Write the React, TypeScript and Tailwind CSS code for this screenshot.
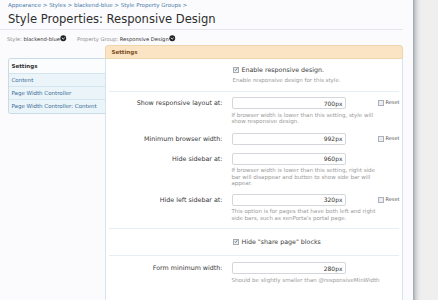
import type { ReactNode } from 'react';

function Check({ checked }: { checked?: boolean }) {
  return (
    <span className="inline-flex h-[6px] w-[6px] shrink-0 items-center justify-center border border-[#a3abb3] bg-[#eef1f4]">
      {checked && (
        <svg viewBox="0 0 6 6" className="h-[5px] w-[5px]">
          <path d="M1 3.1 L2.4 4.5 L5 1.2" stroke="#3d526a" strokeWidth="1.1" fill="none" />
        </svg>
      )}
    </span>
  );
}

function Menu() {
  return (
    <svg viewBox="0 0 8 8" className="ml-[0.5px] inline-block h-[6.5px] w-[6.5px] align-[-1px]">
      <circle cx="4" cy="4" r="3.6" fill="#222" />
      <path d="M2.2 3.3 L4 5 L5.8 3.3" stroke="#fff" strokeWidth="1.1" fill="none" />
    </svg>
  );
}

function Explain({ children }: { children: ReactNode }) {
  return <p className="mt-[2.5px] whitespace-nowrap text-[5.5px] leading-[6.6px] text-[#9a9a9a]">{children}</p>;
}

function Reset() {
  return (
    <div className="flex h-[12px] items-center gap-[2px] text-[5px] text-[#555]">
      <span className="h-[6px] w-[6px] border border-[#aab1b8] bg-[#eceef1]" />
      Reset
    </div>
  );
}

function Row({
  label,
  value,
  reset,
  className,
  children,
}: {
  label: string;
  value: string;
  reset?: boolean;
  className?: string;
  children?: ReactNode;
}) {
  return (
    <div className={`flex items-start ${className ?? ''}`}>
      <div className="flex h-[12px] w-[117px] items-center justify-end text-[6.35px] text-[#3a3a3a]">{label}</div>
      <div className="ml-[9px] w-[146px]">
        <div className="flex h-[12px] w-[114px] items-center justify-end rounded-[2px] border border-[#d3d7db] bg-white pr-[2px] text-[6px] text-[#333]">
          {value}
        </div>
        {children}
      </div>
      {reset && <Reset />}
    </div>
  );
}

function CheckRow({ label, className, children }: { label: string; className?: string; children?: ReactNode }) {
  return (
    <div className={`pl-[127px] ${className ?? ''}`}>
      <label className="flex items-center gap-[3px] text-[6.3px] leading-[7px] text-[#3a3a3a]">
        <Check checked />
        {label}
      </label>
      {children}
    </div>
  );
}

const tabs = ['Settings', 'Content', 'Page Width Controller', 'Page Width Controller: Content'];

export default function App() {
  return (
    <div className="flex min-h-[300px] w-[438px] overflow-hidden font-['DejaVu_Sans',sans-serif]">
      <div className="h-[300px] w-[413px] overflow-hidden bg-[#fbfbfd]">
        <nav className="px-[8px] pt-[1.5px] text-[5.5px] leading-[6px] text-[#4a7cab]">
          Appearance &gt; Styles &gt; blackend-blue &gt; Style Property Groups &gt;
        </nav>
        <h1 className="mr-[10px] border-b border-[#e4e7eb] px-[8px] pt-[4px] pb-[3px] text-[11.55px] leading-[14px] text-[#2e2e2e]">
          Style Properties: Responsive Design
        </h1>
        <div className="mt-[5.5px] flex px-[7px] text-[5.2px] leading-[7px] text-[#8d8d8d]">
          <span>
            Style: <span className="text-[#333]">blackend-blue</span>
            <Menu />
          </span>
          <span className="ml-[10px]">
            Property Group: <span className="text-[#333]">Responsive Design</span>
            <Menu />
          </span>
        </div>

        <div className="mt-[2.5px] flex items-start pl-[7.5px]">
          <ul className="mt-[13.4px] w-[97px] overflow-hidden rounded-l-[3px] border border-r-0 border-[#c8dce7] text-[5.5px]">
            {tabs.map((tab, i) => (
              <li
                key={tab}
                className={`flex h-[13.3px] items-center px-[3px] ${
                  i > 0 ? 'border-t border-[#d3e5ee] bg-[#eaf4f9] text-[#3b6d9a]' : 'bg-[#fbfcfd] font-bold text-[#333]'
                }`}
              >
                {tab}
              </li>
            ))}
          </ul>

          <section className="w-[298px]">
            <div className="flex h-[13.5px] items-center rounded-t-[3px] border border-[#efd5ad] bg-[#fbe4c4] px-[6px] text-[5.5px] font-bold text-[#7b4d21]">
              Settings
            </div>
            <div className="h-[260px] border-x border-[#d4e5ee] bg-white">
              <CheckRow label="Enable responsive design." className="pt-[7.5px]">
                <p className="mt-[3.5px] text-[5.5px] leading-[6.6px] text-[#9a9a9a]">
                  Enable responsive design for this style.
                </p>
              </CheckRow>
              <div className="mx-[3px] mt-[7.5px] border-t border-[#e5eef3]" />

              <Row label="Show responsive layout at:" value="700px" reset className="mt-[5.5px]">
                <Explain>
                  If browser width is lower than this setting, style will
                  <br />
                  show responsive design.
                </Explain>
              </Row>
              <Row label="Minimum browser width:" value="992px" reset className="mt-[8px]" />
              <Row label="Hide sidebar at:" value="960px" className="mt-[8px]">
                <Explain>
                  If browser width is lower than this setting, right side
                  <br />
                  bar will disappear and button to show side bar will
                  <br />
                  appear.
                </Explain>
              </Row>
              <Row label="Hide left sidebar at:" value="320px" reset className="mt-[6.5px]">
                <Explain>
                  This option is for pages that have both left and right
                  <br />
                  side bars, such as xenPorta's portal page.
                </Explain>
              </Row>
              <div className="mx-[3px] mt-[6.5px] border-t border-[#e5eef3]" />

              <CheckRow label={'Hide "share page" blocks'} className="pt-[9.5px] pb-[10px]" />
              <div className="mx-[3px] border-t border-[#e5eef3]" />

              <Row label="Form minimum width:" value="280px" className="mt-[6px]">
                <Explain>Should be slightly smaller than @responsiveMinWidth</Explain>
              </Row>
            </div>
          </section>
        </div>
      </div>
      <div className="h-[300px] flex-1 bg-[linear-gradient(90deg,#9ea3a8,#c4c8cc_2px,#e2e3e5_5px,#efefef_8px)]" />
    </div>
  );
}
